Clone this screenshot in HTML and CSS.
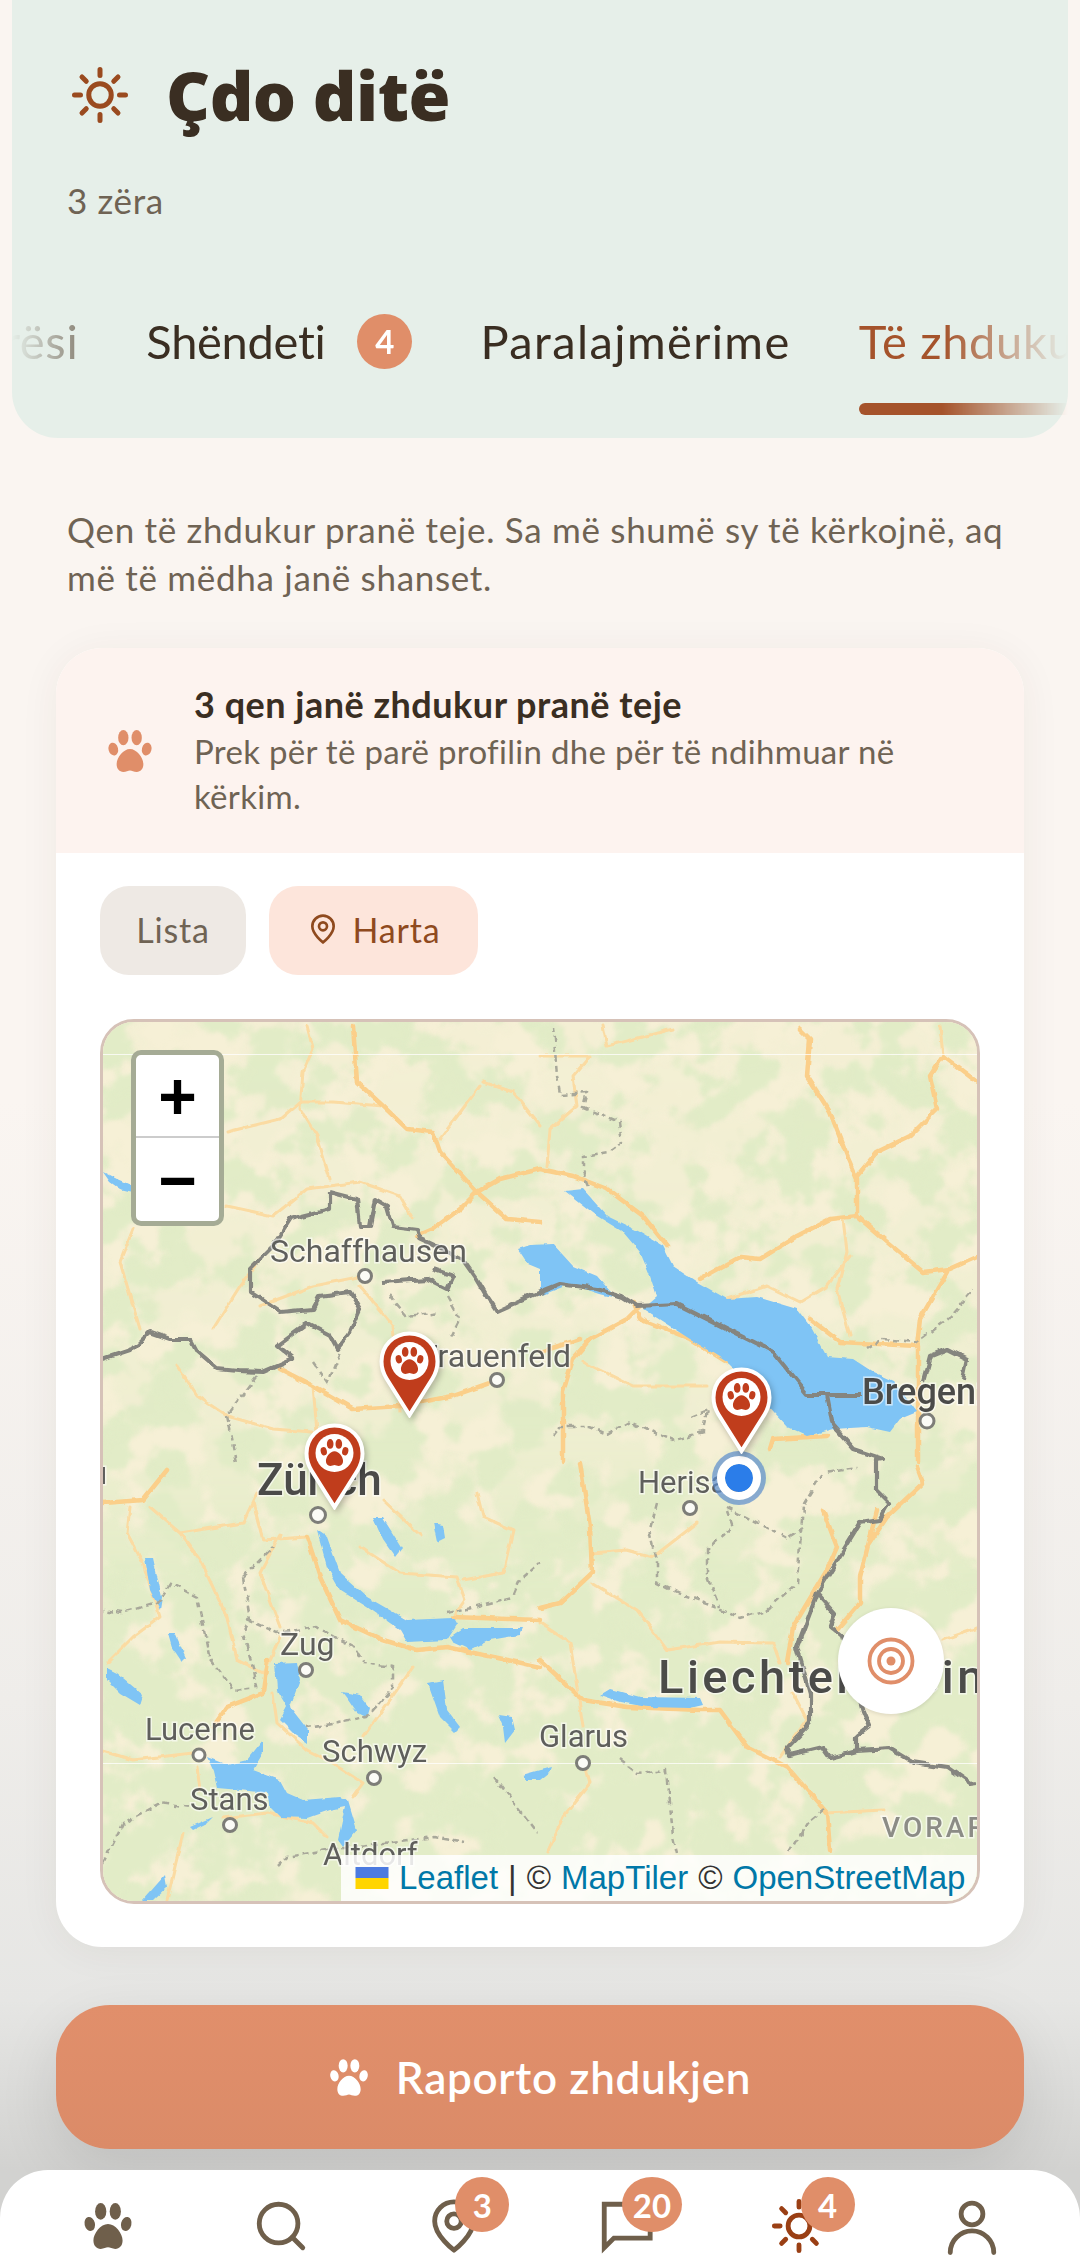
FILE: index.html
```html
<!DOCTYPE html>
<html lang="sq">
<head>
    <meta charset="UTF-8">
    <title>Çdo ditë</title>
    <link rel="stylesheet" href="styles.css">
</head>
<body>
    <svg class="defs" width="0" height="0">
        <symbol id="paw" viewBox="0 0 48 44">
            <ellipse cx="6.5" cy="20" rx="5" ry="6.8" transform="rotate(-14 6.5 20)"/>
            <ellipse cx="17" cy="8" rx="5.4" ry="8"/>
            <ellipse cx="31" cy="8" rx="5.4" ry="8"/>
            <ellipse cx="41.5" cy="20" rx="5" ry="6.8" transform="rotate(14 41.5 20)"/>
            <path d="M24 20c-7 0-14 9-14 16 0 5 3 8 7 8 3 0 5-1.5 7-1.5s4 1.5 7 1.5c4 0 7-3 7-8 0-7-7-16-14-16z"/>
        </symbol>
        <symbol id="sun" viewBox="0 0 24 24">
            <circle cx="12" cy="12" r="4.5"/>
            <path d="M12 1.8v2.4M12 19.800v2.400M4.800 4.800l1.700 1.700M17.500 17.500l1.700 1.700M1.800 12h2.400M19.800 12h2.400M6.500 17.500l-1.700 1.700M19.200 4.800l-1.700 1.700"/>
        </symbol>
        <symbol id="pin" viewBox="0 0 24 24">
            <path d="M20 10c0 6-8 12-8 12s-8-6-8-12a8 8 0 0 1 16 0Z"/>
            <circle cx="12" cy="10" r="3"/>
        </symbol>
        <symbol id="marker" viewBox="0 0 61 87">
            <path class="marker-body" d="M30.500 2.500C14.500 2.500 2.500 15 2.500 30.500c0 7 2 12 5 17l23 36.500 23-36.500c3-5 5-10 5-17C58.500 15 46.500 2.500 30.500 2.500z"/>
            <circle cx="30.500" cy="30" r="19" fill="#fff"/>
            <use href="#paw" x="15.500" y="16" width="30" height="27" fill="#c03d1c"/>
        </symbol>
    </svg>

    <header class="head">
        <div class="head-title">
            <svg class="head-sun"><use href="#sun"/></svg>
            <h1>Çdo ditë</h1>
        </div>
        <p class="head-count">3 zëra</p>
        <div class="tabs">
            <div class="tab tab-clipped"><span class="tab-label">Mirësi</span><i class="tab-line"></i></div>
            <div class="tab tab-tight"><span class="tab-label">Shëndeti <b class="badge">4</b></span><i class="tab-line"></i></div>
            <div class="tab tab-wide"><span class="tab-label">Paralajmërime</span><i class="tab-line"></i></div>
            <div class="tab tab-on"><span class="tab-label">Të zhdukur</span><i class="tab-line"></i></div>
        </div>
    </header>

    <p class="intro">Qen të zhdukur pranë teje. Sa më shumë sy të kërkojnë, aq më të mëdha janë shanset.</p>

    <section class="card">
        <div class="notice">
            <svg class="notice-paw"><use href="#paw"/></svg>
            <div>
                <h2>3 qen janë zhdukur pranë teje</h2>
                <p>Prek për të parë profilin dhe për të ndihmuar në kërkim.</p>
            </div>
        </div>
        <div class="chips">
            <span class="chip">Lista</span>
            <span class="chip chip-on"><svg class="chip-pin"><use href="#pin"/></svg>Harta</span>
        </div>
        <div class="map">
            <svg class="map-art" viewBox="3 3 874 879">
                <defs>
                    <filter id="forest" x="0" y="0" width="100%" height="100%" color-interpolation-filters="sRGB">
                        <feTurbulence type="fractalNoise" baseFrequency="0.022" numOctaves="5" seed="11"/>
                        <feColorMatrix values="0 0 0 0 .885  0 0 0 0 .925  0 0 0 0 .78  10 0 0 0 -4.800"/>
                        <feGaussianBlur stdDeviation="1.4"/>
                    </filter>
                    <filter id="forest2" x="0" y="0" width="100%" height="100%" color-interpolation-filters="sRGB">
                        <feTurbulence type="fractalNoise" baseFrequency="0.02" numOctaves="5" seed="4"/>
                        <feColorMatrix values="0 0 0 0 .885  0 0 0 0 .925  0 0 0 0 .78  8 0 0 0 -3.300"/>
                        <feGaussianBlur stdDeviation="1.4"/>
                    </filter>
                    <filter id="wiggle" x="-2%" y="-2%" width="104%" height="104%">
                        <feTurbulence type="fractalNoise" baseFrequency="0.07" numOctaves="2" seed="3"/>
                        <feDisplacementMap in="SourceGraphic" scale="7" xChannelSelector="R" yChannelSelector="G"/>
                        <feGaussianBlur stdDeviation="0.6"/>
                    </filter>
                    <filter id="shore" x="-2%" y="-2%" width="104%" height="104%">
                        <feTurbulence type="fractalNoise" baseFrequency="0.1" numOctaves="2" seed="8"/>
                        <feDisplacementMap in="SourceGraphic" scale="4" xChannelSelector="R" yChannelSelector="G"/>
                        <feGaussianBlur stdDeviation="0.7"/>
                    </filter>
                    <filter id="soft"><feGaussianBlur stdDeviation="0.7"/></filter>
                    <linearGradient id="south" x1="0" y1="0" x2="0" y2="1">
                        <stop offset="0" stop-color="#fff" stop-opacity="0.1"/>
                        <stop offset="0.45" stop-color="#fff" stop-opacity="0.3"/>
                        <stop offset="0.65" stop-color="#fff" stop-opacity="1"/>
                    </linearGradient>
                    <mask id="south-mask"><rect width="880" height="885" fill="url(#south)"/></mask>
                </defs>

                <rect class="land" width="880" height="885"/>
                <rect width="880" height="885" filter="url(#forest)"/>
                <g mask="url(#south-mask)"><rect width="880" height="885" filter="url(#forest2)"/></g>

                <g class="roads" filter="url(#shore)">
                    <path class="road" d="M207 7L213 30 203 53 200 90 217 117 230 160M127 113L180 100 200 83 233 83 283 87M127 187L173 197 207 170 260 163 300 177 313 200M33 210L20 243 40 310M113 310L140 267 160 240M160 287L213 267 263 257M260 267L293 307 300 393M77 347L97 377 127 397 173 410 213 413M213 367L217 413M383 63L413 73 440 107M380 67L340 120M503 7L507 27 573 10M440 37L490 37 473 57 477 87 450 110 447 147M840 7L843 37M743 200L747 233 737 270 750 317M700 283L667 267 627 280M700 283L727 267 750 237M483 343L533 367 607 367M30 488L27 514 43 544 60 598 33 618 7 644M50 488L80 514 100 541 127 598 137 641 163 654 170 641 180 618M80 514L143 504 157 474M153 484L163 521 207 518M180 516L160 554 180 608M173 674L177 704 207 731 227 741 263 764 253 778M313 648L290 681 263 718M93 734L33 741 0 731M97 748L100 771M123 799L167 794 213 804 227 818M83 814L67 881M283 481L320 516M260 528L300 554 357 558 365 581 353 598M377 474L383 498 413 511 403 554 363 561M492 534L527 531 553 538 597 504M492 564L537 591 567 631 620 623 673 624 680 644M440 604L470 624 477 668 483 708M483 738L490 764 463 798 447 834M727 794L783 791M693 674L707 701 680 738M843 621L880 608"/>
                    <path class="road road-main" d="M253 7L257 63 283 87 307 110 333 113 340 133 377 173 407 200 440 203M377 173L400 160 440 150M377 173L360 190 333 210 317 217M180 350L213 367 253 390 300 387 353 377 393 363M700 10L710 20 707 57 730 93 747 137 757 160 757 197 787 223 823 253 850 250 877 238M757 157L777 133 810 117 837 90 830 57 843 37 877 63M757 197L730 200 697 217 660 240 640 238 600 260M710 300L740 323 817 327 820 300 847 253M818 327L818 443M440 150L473 157 507 170 543 197 567 227M540 287L527 300 490 320 473 340 463 373 463 443M533 283L540 300 590 320 627 343M670 430L673 420 727 417M3 484L43 481 67 451M207 518L220 558 240 601 283 621 317 631 347 628 440 648M167 641L163 674 127 688 113 708M353 598L440 601M480 444L490 508 492 554 460 584 440 589M440 641L483 681 527 688 600 691 620 691 647 728 687 748 727 794 730 831M723 491L737 528 727 551 693 608 687 644M777 491L760 558 760 584 737 611M817 448L823 464 787 498 767 528M440 333L480 320"/>
                </g>

                <g class="lakes" filter="url(#shore)">
                    <path d="M465 172L483 170 507 197 540 213 563 227 573 247 597 263 627 280 657 278 697 290 712 310 727 338 753 340 773 353 793 362 817 393 800 400 790 413 767 408 733 410 707 417 687 408 673 393 647 363 627 343 590 320 543 290 557 278 550 257 540 233 523 213 497 197z"/>
                    <path d="M418 230L430 226 453 225 473 247 497 257 510 272 520 280 500 275 470 265 440 277 440 250 428 245z"/>
                    <path d="M3 153L17 160 33 167 33 173 20 170 10 163z"/>
                    <path d="M217 511L227 518 240 554 267 578 307 601 353 599 357 606 347 621 307 623 300 611 267 588 240 571 227 548z"/>
                    <path d="M350 618L363 609 380 609 423 609 420 616 390 621 370 631 353 623z"/>
                    <path d="M273 499L283 499 302 529 295 538 283 521z"/>
                    <path d="M333 504L343 506 345 519 337 523z"/>
                    <path d="M45 539L53 539 62 578 60 591 50 571z"/>
                    <path d="M68 614L75 614 86 639 82 643 72 628z"/>
                    <path d="M7 649L17 654 43 676 40 686 20 674 7 661z"/>
                    <path d="M175 644L197 643 200 661 190 688 208 711 208 724 193 714 180 701 187 688 177 671z"/>
                    <path d="M242 673L260 676 270 689 267 699 257 694 248 681z"/>
                    <path d="M328 664L343 661 347 691 360 708 355 713 340 698z"/>
                    <path d="M398 696L412 698 415 711 405 724 403 708z"/>
                    <path d="M107 738L127 746 147 741 163 721 163 734 153 751 180 761 187 774 203 781 240 778 248 781 257 811 243 828 238 821 245 788 230 791 207 799 180 798 170 788 167 774 140 771 117 769 113 751z"/>
                    <path d="M90 808L113 798 107 804 93 811z"/>
                    <path d="M43 881L65 856 67 868 53 881z"/>
                    <path d="M500 676L510 670 540 678 600 679 603 686 590 689 547 688 520 683z"/>
                    <path d="M422 756L440 751 452 748 450 753 440 761 425 761z"/>
                </g>

                <path class="region" filter="url(#wiggle)" d="M453 7L457 57 460 75 487 73 483 88 520 103 523 123 510 133 483 137 483 153 490 170M453 417L460 408 490 408 507 415 530 402 553 413 573 422 603 413 607 390 590 397M767 330L783 320 817 323 847 300 873 270M347 277L360 300 350 320M290 277L307 297 340 293M213 343L227 363 240 333M157 357L127 397 137 443M143 558L150 601 143 614 153 648 157 668 133 671 110 641 97 578 70 564 57 584 23 594 3 591M143 558L173 528M147 601L177 614 217 608 253 628 263 644 293 648 293 668 267 698 207 708M347 594L373 588 413 578 420 561 440 544M3 844L23 804 60 784 90 788M177 848L187 838 227 831 333 818 363 824M393 758L417 788 437 814M557 484L550 511 557 541 557 564 583 576 617 588 640 599 667 591 697 564 703 488 723 454 757 449M627 491L633 508 607 531 607 554 620 588M627 488L687 518 703 508M520 741L537 754 567 751 573 818 577 834M690 834L707 804 723 791"/>

                <path class="border" filter="url(#wiggle)" d="M230 173L230 190 190 200 173 227 150 250 150 273 180 293 213 290 220 277 250 273 260 290 248 317 237 330 230 317 207 305 177 327 193 340 163 353 137 352 117 350 97 333 90 320 70 320 50 313 33 330 3 340M230 173L257 180 260 207 270 207 275 180 287 187 293 207 317 210 320 220 363 240 377 260 387 277 397 292 440 273 460 265 497 270 523 278 537 287 577 285 673 333 707 375 760 375M727 375L733 407 753 430 783 440 777 441 777 471 790 484 780 501 760 504 733 548 717 574 697 628 710 674 710 704 687 728 690 736 723 728 730 738 757 731 790 729 813 743 847 748 870 764 877 763M717 574L735 594 730 608 742 618 763 691 770 708 757 718 757 731M283 263L327 260 347 270 353 257 333 250M823 363L830 337 847 330 867 340 863 360"/>

                <g class="tile-lines">
                    <rect x="0" y="35" width="880" height="1"/>
                    <rect x="0" y="744" width="880" height="1"/>
                </g>

                <g class="towns" filter="url(#soft)">
                    <circle cx="265" cy="257" r="6.500"/>
                    <circle cx="397" cy="361" r="6.500"/>
                    <circle cx="218" cy="496" r="7.500"/>
                    <circle cx="590" cy="489" r="6.500"/>
                    <circle cx="827" cy="402" r="7"/>
                    <circle cx="206" cy="651" r="6.500"/>
                    <circle cx="99" cy="736" r="6"/>
                    <circle cx="274" cy="759" r="6.500"/>
                    <circle cx="130" cy="806" r="6.500"/>
                    <circle cx="483" cy="744" r="6.500"/>
                </g>

                <g class="labels" filter="url(#soft)">
                    <text x="170" y="243" class="lb-m">Schaffhausen</text>
                    <text x="471" y="348" class="lb-m lb-end">Frauenfeld</text>
                    <text x="157" y="476" class="lb-l">Zürich</text>
                    <text x="538" y="474" class="lb-s">Herisau</text>
                    <text x="762" y="385" class="lb-l lb-bregenz">Bregenz</text>
                    <text x="558" y="674" class="lb-xl">Liechtenstein</text>
                    <text x="180" y="636" class="lb-m">Zug</text>
                    <text x="45" y="721" class="lb-s">Lucerne</text>
                    <text x="222" y="743" class="lb-s">Schwyz</text>
                    <text x="90" y="791" class="lb-s">Stans</text>
                    <text x="223" y="846" class="lb-s">Altdorf</text>
                    <text x="439" y="728" class="lb-s">Glarus</text>
                    <text x="782" y="818" class="lb-region">VORARLBERG</text>
                    <text x="7" y="465" class="lb-s lb-end">Aarau</text>
                </g>
            </svg>

            <div class="zoom">
                <a>+</a>
                <a>−</a>
            </div>

            <svg class="pin pin-a"><use href="#marker"/></svg>
            <svg class="pin pin-b"><use href="#marker"/></svg>
            <span class="me"></span>
            <svg class="pin pin-c"><use href="#marker"/></svg>

            <div class="locate">
                <svg viewBox="0 0 48 48" width="48" height="48">
                    <circle cx="24" cy="24" r="21.500"/>
                    <circle cx="24" cy="24" r="12"/>
                    <circle class="locate-dot" cx="24" cy="24" r="4.500"/>
                </svg>
            </div>

            <div class="attrib">
                <svg class="flag" viewBox="0 0 12 8"><rect width="12" height="4" fill="#4c7be0"/><rect y="4" width="12" height="4" fill="#ffd500"/></svg>
                <a>Leaflet</a> <span>|</span> © <a>MapTiler</a> © <a>OpenStreetMap</a>
            </div>
        </div>
    </section>

    <button class="report"><svg class="report-paw"><use href="#paw"/></svg>Raporto zhdukjen</button>

    <nav class="nav">
        <div class="nav-item"><svg class="nav-paw"><use href="#paw"/></svg></div>
        <div class="nav-item">
            <svg class="nav-ico" viewBox="0 0 24 24"><circle cx="11" cy="11" r="8"/><path d="M21 21l-4.350-4.350"/></svg>
        </div>
        <div class="nav-item">
            <svg class="nav-ico"><use href="#pin"/></svg>
            <b class="badge nav-badge">3</b>
        </div>
        <div class="nav-item">
            <svg class="nav-ico nav-chat" viewBox="0 0 24 24"><path d="M22 17H7l-4 4V3h19z"/></svg>
            <b class="badge nav-badge nav-badge-wide">20</b>
        </div>
        <div class="nav-item nav-on">
            <svg class="nav-ico"><use href="#sun"/></svg>
            <b class="badge nav-badge">4</b>
        </div>
        <div class="nav-item">
            <svg class="nav-ico" viewBox="0 0 24 24"><circle cx="12" cy="7" r="4.500"/><path d="M3 23a9 9 0 0 1 18 0"/></svg>
        </div>
    </nav>
</body>
</html>
```

FILE: styles.css
```css
* {
    margin: 0;
    padding: 0;
    box-sizing: border-box;
}
html, body {
    height: 2268px;
    overflow: hidden;
}
body {
    width: 1080px;
    display: flex;
    flex-direction: column;
    background: linear-gradient(#faf5f1 0, #faf5f1 1100px, #efedea 1700px, #e6e6e4 2000px, #d2d2d0 2170px);
    font-family: Lato, "Noto Sans", sans-serif;
    color: #3a2e22;
}
.defs {
    position: absolute;
}

/* header */
.head {
    margin: 0 12px;
    height: 438px;
    background: #e6efe9;
    border-radius: 0 0 46px 46px;
}
.head-title {
    display: flex;
    align-items: center;
    gap: 36px;
    padding: 62px 0 0 58px;
}
.head-sun {
    width: 60px;
    height: 60px;
    fill: none;
    stroke: #9a4a1f;
    stroke-width: 2;
    stroke-linecap: round;
}
h1 {
    font-family: "Noto Sans", sans-serif;
    font-size: 68px;
    line-height: 66px;
    font-weight: 900;
    letter-spacing: -.5px;
    color: #3a2e22;
}
.head-count {
    margin-top: 50px;
    padding-left: 55px;
    font-size: 35px;
    letter-spacing: .6px;
    line-height: 44px;
    color: #6f6354;
}
.tabs {
    display: flex;
    gap: 68px;
    margin-top: 89px;
    overflow: hidden;
    -webkit-mask-image: linear-gradient(to right, transparent 0, #000 90px, #000 930px, transparent 1056px);
    mask-image: linear-gradient(to right, transparent 0, #000 90px, #000 930px, transparent 1056px);
}
.tab {
    flex: none;
}
.tab-clipped {
    margin-left: -65px;
    color: #6f6354;
}
.tab-label {
    display: flex;
    align-items: center;
    gap: 32px;
    height: 60px;
    font-size: 47px;
    letter-spacing: .7px;
}
.tab-tight .tab-label {
    letter-spacing: -.3px;
}
.tab-wide .tab-label {
    letter-spacing: 1.4px;
}
.tab-line {
    display: block;
    height: 12px;
    margin-top: 32px;
    border-radius: 6px;
}
.tab-on {
    color: #a5532b;
}
.tab-on .tab-line {
    background: #a5532b;
}
.badge {
    display: flex;
    align-items: center;
    justify-content: center;
    width: 55px;
    height: 55px;
    border-radius: 50%;
    background: #e08e69;
    color: #fff;
    font-size: 33px;
    font-weight: 700;
    letter-spacing: 0;
}

.intro {
    margin: 67px 67px 0;
    font-size: 35px;
    letter-spacing: .7px;
    line-height: 48px;
    color: #6f6354;
}

/* card */
.card {
    margin: 47px 56px 0;
    height: 1299px;
    background: #fff;
    border-radius: 46px;
    overflow: hidden;
    box-shadow: 0 4px 40px rgba(60, 50, 40, .06);
}
.notice {
    display: flex;
    align-items: center;
    gap: 41px;
    height: 205px;
    padding: 0 60px 4px 51px;
    background: #fdf3ef;
}
.notice-paw {
    flex: none;
    width: 46px;
    height: 42px;
    margin-top: 4px;
    fill: #e08e69;
}
h2 {
    font-size: 36px;
    letter-spacing: .5px;
    line-height: 50px;
    font-weight: 700;
}
.notice p {
    font-size: 33px;
    letter-spacing: .3px;
    line-height: 45px;
    color: #6f6354;
}
.chips {
    display: flex;
    gap: 23px;
    padding: 33px 44px 0;
}
.chip {
    display: flex;
    align-items: center;
    justify-content: center;
    gap: 14px;
    width: 146px;
    height: 89px;
    padding-bottom: 3px;
    border-radius: 29px;
    background: #eee9e4;
    color: #6f6354;
    font-size: 34px;
    letter-spacing: .8px;
}
.chip-on {
    width: 209px;
    background: #fde5db;
    color: #8f4a1e;
}
.chip-pin {
    width: 32px;
    height: 32px;
    fill: none;
    stroke: #8f4a1e;
    stroke-width: 2;
}

/* map */
.map {
    position: relative;
    margin: 44px 44px 0;
    height: 885px;
    border: 3px solid #d6c2b8;
    border-radius: 34px;
    overflow: hidden;
    background: #f6f0d4;
}
.map-art {
    display: block;
    width: 874px;
    height: 879px;
}
.land {
    fill: #f6f0d6;
}
.road {
    fill: none;
    stroke: #fbdba2;
    stroke-width: 3;
    stroke-linejoin: round;
    stroke-linecap: round;
}
.road-main {
    stroke: #fbcf8a;
    stroke-width: 4.500;
}
.lakes {
    fill: #7fc4f5;
}
.region {
    fill: none;
    stroke: #a8a89a;
    stroke-width: 2.500;
    stroke-dasharray: 6 4;
}
.border {
    fill: none;
    stroke: #85857f;
    stroke-width: 4.200;
    stroke-linejoin: round;
}
.tile-lines {
    fill: #fff;
    opacity: .75;
}
.towns {
    fill: #fbfbf6;
    stroke: #7d7d78;
    stroke-width: 3;
}
.labels text {
    font-family: Roboto, "Liberation Sans", sans-serif;
    fill: #5f5f5c;
    stroke: rgba(255, 255, 255, .6);
    stroke-width: 3;
    paint-order: stroke;
}
.lb-s {
    font-size: 31px;
}
.lb-m {
    font-size: 32px;
}
.lb-l {
    font-size: 44px;
    font-weight: 500;
    fill: #4c4c4a !important;
}
.lb-bregenz {
    font-size: 36px;
}
.lb-xl {
    font-size: 47px;
    font-weight: 500;
    letter-spacing: 3.500px;
    fill: #4c4c4a !important;
}
.lb-region {
    font-size: 28px;
    font-weight: 500;
    letter-spacing: 3px;
    fill: #8c8c86 !important;
}
.lb-end {
    text-anchor: end;
}

.zoom {
    position: absolute;
    left: 28px;
    top: 28px;
    width: 93px;
    height: 176px;
    border: 5px solid #a5ab95;
    border-radius: 10px;
    background: #fff;
}
.zoom a {
    display: flex;
    align-items: center;
    justify-content: center;
    height: 83px;
    font-family: "Liberation Sans", sans-serif;
    font-weight: 700;
    font-size: 66px;
    color: #000;
}
.zoom a:first-child {
    border-bottom: 2px solid #ccc;
}
.pin {
    position: absolute;
    width: 61px;
    height: 87px;
    filter: drop-shadow(2px 3px 3px rgba(0, 0, 0, .25));
}
.marker-body {
    fill: #c03d1c;
    stroke: #fff;
    stroke-width: 4;
}
.pin-a {
    left: 276px;
    top: 309px;
}
.pin-b {
    left: 201px;
    top: 401px;
}
.pin-c {
    left: 608px;
    top: 345px;
}
.me {
    position: absolute;
    left: 614px;
    top: 434px;
    width: 44px;
    height: 44px;
    border-radius: 50%;
    background: #2b7de9;
    border: 8px solid #fff;
    box-shadow: 0 0 0 5px rgba(90, 140, 205, .7);
    background-clip: padding-box;
}
.locate {
    position: absolute;
    left: 735px;
    top: 586px;
    width: 106px;
    height: 106px;
    display: flex;
    align-items: center;
    justify-content: center;
    border-radius: 50%;
    background: #fff;
    box-shadow: 0 1px 4px rgba(0, 0, 0, .12);
}
.locate circle {
    fill: none;
    stroke: #e08e69;
    stroke-width: 3.800;
}
.locate .locate-dot {
    fill: #e08e69;
    stroke: none;
}
.attrib {
    position: absolute;
    right: 0;
    bottom: 0;
    display: flex;
    align-items: center;
    gap: 10px;
    width: 636px;
    height: 46px;
    padding-left: 14px;
    background: rgba(255, 255, 255, .85);
    font-family: "Liberation Sans", sans-serif;
    font-size: 33px;
    color: #333;
}
.attrib a {
    color: #0078a8;
}
.flag {
    width: 34px;
    height: 22px;
}

/* button */
.report {
    display: flex;
    align-items: center;
    justify-content: center;
    gap: 27px;
    margin: 58px 56px 0;
    height: 144px;
    border: 0;
    border-radius: 54px;
    background: linear-gradient(#e18f6b, #db8b68);
    box-shadow: 0 20px 60px rgba(0, 0, 0, .1);
    color: #fff;
    font-family: inherit;
    font-size: 44px;
    letter-spacing: .7px;
    font-weight: 600;
}
.report-paw {
    width: 40px;
    height: 37px;
    fill: #fff;
}

/* bottom nav */
.nav {
    display: grid;
    grid-template-columns: repeat(6, 1fr);
    margin-top: auto;
    height: 98px;
    padding: 27px 22px 0;
    background: #fff;
    border-radius: 48px 48px 0 0;
}
.nav-item {
    position: relative;
    display: flex;
    justify-content: center;
    color: #6f5f4b;
}
.nav-ico {
    width: 58px;
    height: 58px;
    fill: none;
    stroke: currentColor;
    stroke-width: 2;
    stroke-linecap: round;
    stroke-linejoin: round;
}
.nav-chat {
    stroke-linejoin: miter;
}
.nav-paw {
    width: 50px;
    height: 46px;
    margin-top: 6px;
    fill: currentColor;
}
.nav-on {
    color: #9a3f14;
}
.nav-badge {
    position: absolute;
    top: -20px;
    left: 88px;
    width: 54px;
}
.nav-badge-wide {
    width: 60px;
    left: 82px;
}
```
